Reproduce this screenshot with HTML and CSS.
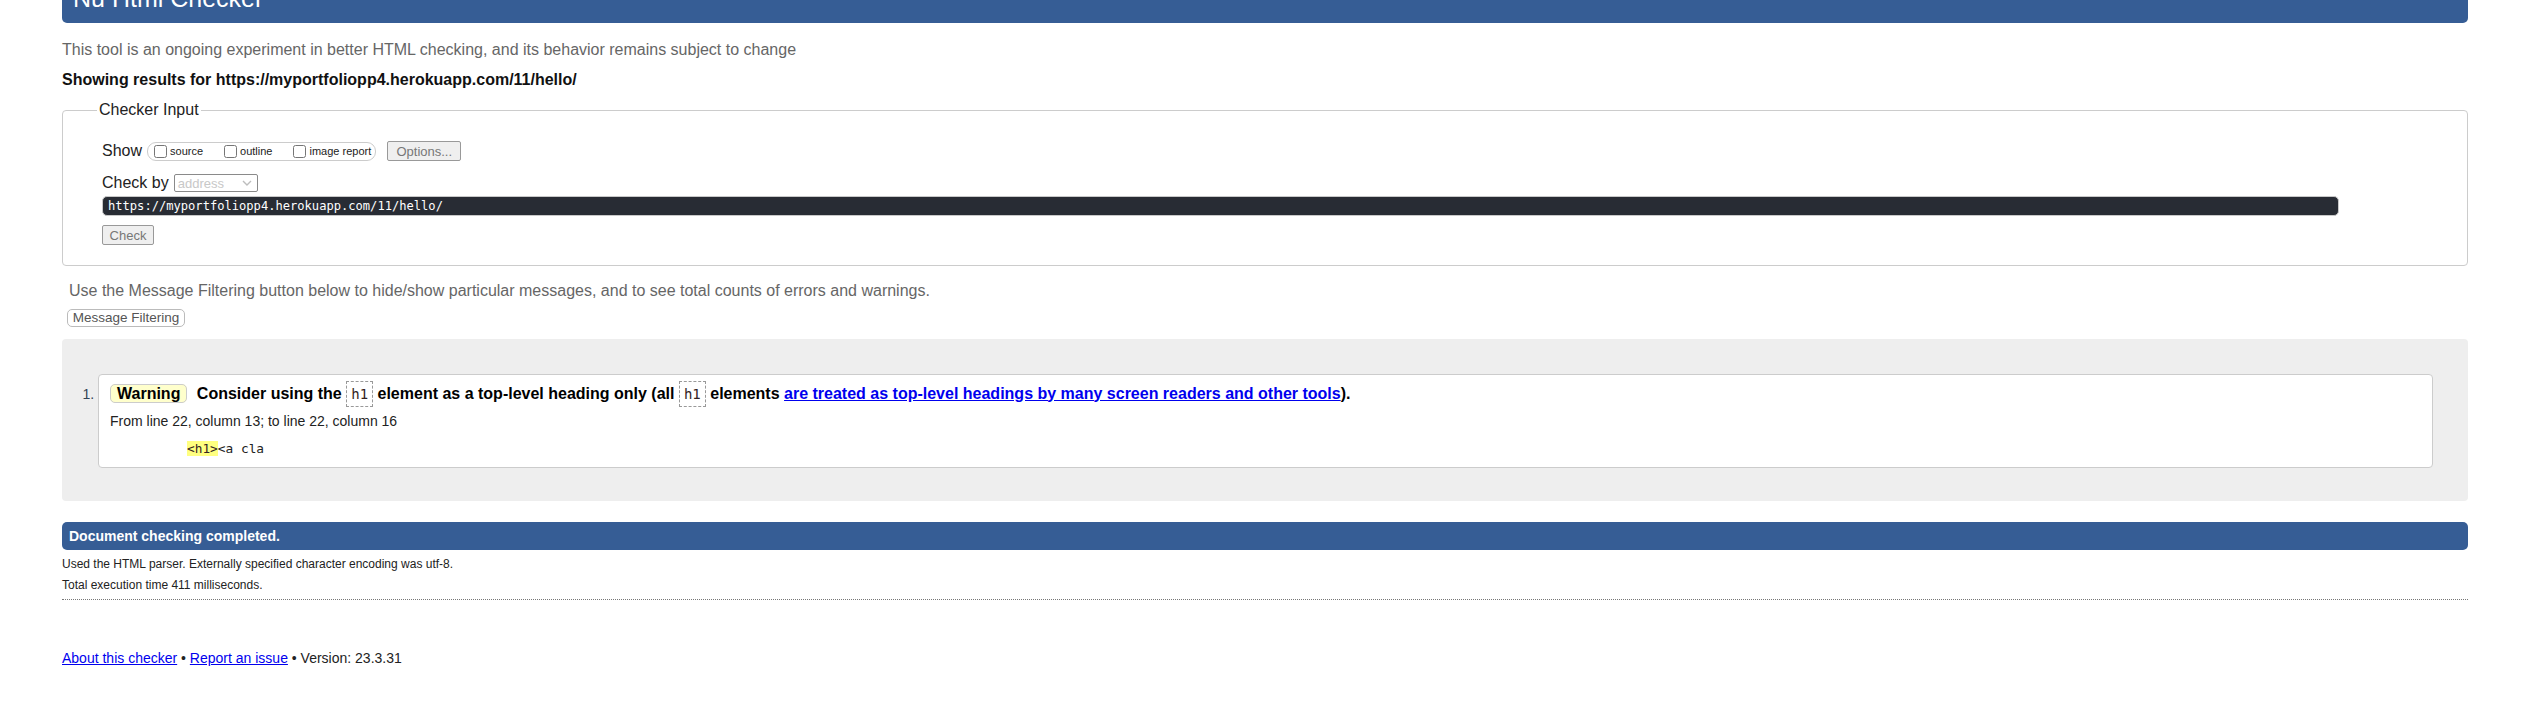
FILE: index.html
```html
<!DOCTYPE html>
<html lang="en">
<head>
<meta charset="utf-8">
<title>Showing results for https://myportfoliopp4.herokuapp.com/11/hello/ - Nu Html Checker</title>
<link rel="stylesheet" href="styles.css">
</head>
<body>
<h1 class="title">Nu Html Checker</h1>
<p class="intro">This tool is an ongoing experiment in better HTML checking, and its behavior remains subject to change</p>
<p class="showing">Showing results for https://myportfoliopp4.herokuapp.com/11/hello/</p>
<fieldset class="checker">
  <legend>Checker Input</legend>
  <div class="row show-row">
    <span class="lbl">Show</span>
    <span class="opts">
      <label class="opt"><input type="checkbox">source</label>
      <label class="opt"><input type="checkbox">outline</label>
      <label class="opt last"><input type="checkbox">image report</label>
    </span>
    <button class="btn options-btn" type="button">Options...</button>
  </div>
  <div class="row by-row">
    <span class="lbl">Check by</span>
    <span class="select"><span>address</span><svg class="chev" width="10" height="6" viewBox="0 0 10 6"><path d="M1 1 L5 5 L9 1" fill="none" stroke="#bdbdbd" stroke-width="1.4"/></svg></span>
  </div>
  <div class="url">https://myportfoliopp4.herokuapp.com/11/hello/</div>
  <div class="row check-row"><button class="btn check-btn" type="button">Check</button></div>
</fieldset>
<p class="filter-note">Use the Message Filtering button below to hide/show particular messages, and to see total counts of errors and warnings.</p>
<button class="filter-btn" type="button">Message Filtering</button>
<div class="results">
  <ol class="messages">
    <li class="warning">
      <p class="msg"><strong class="badge">Warning</strong> <span class="text">Consider using the <code>h1</code> element as a top-level heading only (all <code>h1</code> elements <a href="#">are treated as top-level headings by many screen readers and other tools</a>).</span></p>
      <p class="location">From line 22, column 13; to line 22, column 16</p>
      <p class="extract"><code><b class="hl">&lt;h1&gt;</b>&lt;a cla</code></p>
    </li>
  </ol>
</div>
<h2 class="done">Document checking completed.</h2>
<p class="details">Used the HTML parser. Externally specified character encoding was utf-8.</p>
<p class="details">Total execution time 411 milliseconds.</p>
<hr class="sep">
<p class="footer"><a href="#">About this checker</a> • <a href="#">Report an issue</a> • Version: 23.3.31</p>
</body>
</html>
```
FILE: styles.css
```css
html, body {
  background: #fff;
}
body {
  margin: 0;
  padding: 0 75px 0 62px;
  font-family: "Liberation Sans", Arial, sans-serif;
  font-size: 16px;
  color: #222;
}
.title {
  margin: -26px 0 0;
  padding: 10px 11px;
  font-size: 25px;
  line-height: 29px;
  font-weight: normal;
  color: #fff;
  background: #365d95;
  border-radius: 5px;
}
.intro {
  margin: 17.5px 0 0;
  line-height: 18px;
  color: #666;
}
.showing {
  margin: 12px 0 0;
  line-height: 18px;
  font-weight: bold;
  color: #111;
}
.checker {
  margin: 12.5px 0 0;
  padding: 22px 39px 20px;
  border: 1px solid #ccc;
  border-radius: 4px;
  min-width: 0;
}
.checker legend {
  padding: 0 2px;
  margin-left: -5px;
  font-size: 16px;
  line-height: 18px;
  color: #222;
}
.row {
  display: flex;
  align-items: center;
}
.show-row {
  height: 20px;
}
.lbl {
  margin-right: 5px;
  line-height: 18px;
  color: #222;
}
.opts {
  display: inline-flex;
  align-items: center;
  height: 19px;
  box-sizing: border-box;
  padding: 0 4px 0 2px;
  border: 1px solid #ccc;
  border-radius: 9px;
}
.opt {
  display: inline-flex;
  align-items: center;
  font-size: 11px;
  color: #222;
  margin-right: 17px;
}
.opt.last {
  margin-right: 0;
}
.opt input {
  margin: 0 3px 0 4px;
  width: 13px;
  height: 13px;
}
.btn {
  box-sizing: border-box;
  height: 20px;
  padding: 0;
  font-family: "Liberation Sans", Arial, sans-serif;
  font-size: 13px;
  color: #777;
  background: #efefef;
  border: 1px solid #999;
  border-radius: 2px;
  text-align: center;
}
.options-btn {
  width: 74px;
  margin-left: 11px;
}
.by-row {
  margin-top: 13px;
  height: 18px;
}
.select {
  box-sizing: border-box;
  display: inline-flex;
  align-items: center;
  justify-content: space-between;
  width: 84px;
  height: 18px;
  padding: 0 5px 0 3px;
  border: 1px solid #8a8a8a;
  border-radius: 2px;
  font-size: 13px;
  color: #c8c8c8;
}
.chev {
  display: block;
}
.url {
  box-sizing: border-box;
  width: 2237px;
  height: 20px;
  margin-top: 4px;
  padding: 0 5px;
  background: #282c34;
  border: 1px solid #c8c8c8;
  border-radius: 5px;
  color: #fff;
  font-family: "DejaVu Sans Mono", monospace;
  font-size: 12.1px;
  line-height: 18px;
  white-space: nowrap;
}
.check-row {
  margin-top: 9px;
}
.check-btn {
  width: 52px;
}
.filter-note {
  margin: 16px 0 0 7px;
  line-height: 18px;
  color: #666;
}
.filter-btn {
  display: block;
  box-sizing: border-box;
  width: 118px;
  height: 18px;
  margin: 8.5px 0 0 5px;
  padding: 0;
  font-family: "Liberation Sans", Arial, sans-serif;
  font-size: 13.5px;
  color: #555;
  background: #fff;
  border: 1px solid #bbb;
  border-radius: 5px;
}
.results {
  margin-top: 12px;
  padding: 35px 35px 33px 36px;
  background: #eee;
  border-radius: 4px;
}
.messages {
  margin: 0;
  padding: 0;
  list-style: decimal outside;
}
.warning {
  padding: 10px 11px 10px;
  background: #fff;
  border: 1px solid #ccc;
  border-radius: 4px;
}
.warning::marker {
  font-size: 14px;
  color: #345;
}
.msg {
  margin: 0;
  line-height: 18px;
  color: #000;
}
.badge {
  margin-right: 5px;
  padding: 0 6px;
  background: #ffc;
  border: 1px solid #ccc;
  border-radius: 5px;
}
.text {
  font-weight: bold;
}
.msg code {
  padding: 4px;
  border: 1px dashed #999;
  font-family: "DejaVu Sans Mono", monospace;
  font-size: 14px;
  line-height: 1;
  font-weight: normal;
  color: #322;
}
.msg a {
  color: #00e;
}
.location {
  margin: 10px 0 0;
  font-size: 14px;
  line-height: 16px;
  color: #222;
}
.extract {
  margin: 11px 0 0 77px;
  line-height: 16px;
}
.extract code {
  font-family: "DejaVu Sans Mono", monospace;
  font-size: 12.8px;
  color: #222;
}
.hl {
  font-weight: normal;
  background: #ffff80;
  color: #322;
}
.done {
  margin: 21px 0 0;
  padding: 6px 7px;
  font-size: 14px;
  line-height: 16px;
  font-weight: bold;
  color: #fff;
  background: #365d95;
  border-radius: 5px;
}
.details {
  margin: 7px 0 0;
  font-size: 12px;
  line-height: 14px;
  color: #222;
}
.sep {
  margin: 7px 0 0;
  height: 0;
  border: 0;
  border-top: 1px dotted #777;
}
.footer {
  margin: 50px 0 0;
  font-size: 14px;
  line-height: 16px;
  color: #222;
}
.footer a {
  color: #00e;
}
```
